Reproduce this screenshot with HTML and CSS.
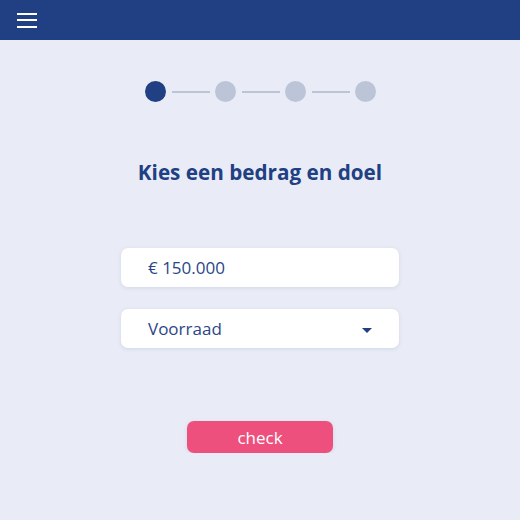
FILE: index.html
```html
<!DOCTYPE html>
<html lang="nl">
<head>
    <meta charset="UTF-8">
    <meta name="viewport" content="width=device-width, initial-scale=1.0">
    <title>Kies een bedrag en doel</title>
    <link rel="stylesheet" href="styles.css">
</head>
<body>

<header class="topbar">
    <button class="menu-btn" aria-label="Menu">
        <span></span><span></span><span></span>
    </button>
</header>

<main class="content">
    <div class="steps">
        <span class="step active"></span>
        <span class="step-line"></span>
        <span class="step"></span>
        <span class="step-line"></span>
        <span class="step"></span>
        <span class="step-line"></span>
        <span class="step"></span>
    </div>

    <h1 class="title">Kies een bedrag en doel</h1>

    <form class="amount-form">
        <div class="field">€ 150.000</div>
        <div class="field select">
            <span>Voorraad</span>
            <span class="caret"></span>
        </div>
        <button type="submit" class="check-btn">check</button>
    </form>
</main>

</body>
</html>
```

FILE: styles.css
```css
body {
    margin: 0;
    padding: 0;
    font-family: "Open Sans", Arial, sans-serif;
    background-color: #e9ecf6;
    color: #213f83;
}

.topbar {
    height: 40px;
    background-color: #213f83;
    display: flex;
    align-items: center;
    padding-left: 17px;
}

.menu-btn {
    width: 20px;
    padding: 0;
    border: none;
    background: none;
    display: flex;
    flex-direction: column;
    gap: 4.5px;
    cursor: pointer;
}

.menu-btn span {
    display: block;
    height: 2px;
    background: #fff;
}

.content {
    display: flex;
    flex-direction: column;
    align-items: center;
}

.steps {
    display: flex;
    align-items: center;
    margin-top: 41px;
    margin-left: 1px;
}

.step {
    width: 21px;
    height: 21px;
    border-radius: 50%;
    background-color: #bcc4d7;
}

.step.active {
    background-color: #213f83;
}

.step-line {
    width: 38px;
    height: 2px;
    margin: 0 5px 0 6px;
    background-color: #bcc4d7;
}

.title {
    font-size: 20.7px;
    font-weight: 700;
    margin: 56px 0 0;
    line-height: 28px;
}

.amount-form {
    width: 278px;
    margin-top: 62px;
    display: flex;
    flex-direction: column;
    align-items: center;
}

.field {
    box-sizing: border-box;
    width: 100%;
    height: 39px;
    padding: 0 27px;
    background: #fff;
    border-radius: 7px;
    box-shadow: 0 1px 4px rgba(33, 63, 131, 0.12);
    display: flex;
    align-items: center;
    font-size: 17px;
    color: #2a4688;
    margin-bottom: 22px;
}

.select {
    justify-content: space-between;
    padding-right: 27px;
}

.caret {
    width: 0;
    height: 0;
    border-left: 5px solid transparent;
    border-right: 5px solid transparent;
    border-top: 5px solid #213f83;
    margin-top: 3px;
}

.check-btn {
    width: 146px;
    height: 32px;
    margin-top: 51px;
    border: none;
    border-radius: 7px;
    background-color: #ee507d;
    color: #fff;
    font-family: "Open Sans", Arial, sans-serif;
    font-size: 17px;
    box-shadow: 0 1px 4px rgba(33, 63, 131, 0.12);
    cursor: pointer;
}
```
